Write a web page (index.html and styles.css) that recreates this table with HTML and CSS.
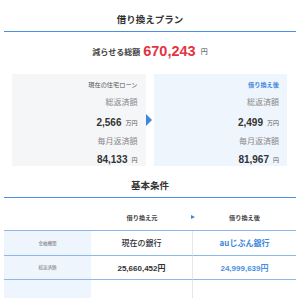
FILE: index.html
```html
<!DOCTYPE html>
<html lang="ja">
<head>
<meta charset="utf-8">
<link rel="stylesheet" href="styles.css">
</head>
<body>
<div class="page">
  <section class="plan">
    <h2 class="sec-title">借り換えプラン</h2>
    <div class="total">
      <span class="total-label">減らせる総額</span>
      <span class="total-num">670,243</span>
      <span class="total-unit">円</span>
    </div>
    <div class="compare">
      <div class="card card-now">
        <div class="card-label">現在の住宅ローン</div>
        <div class="item-label">総返済額</div>
        <div class="item-val"><span class="num">2,566</span><span class="unit">万円</span></div>
        <div class="item-label item-label2">毎月返済額</div>
        <div class="item-val item-val2"><span class="num">84,133</span><span class="unit">円</span></div>
      </div>
      <div class="arrow"></div>
      <div class="card card-after">
        <div class="card-label blue">借り換え後</div>
        <div class="item-label">総返済額</div>
        <div class="item-val"><span class="num">2,499</span><span class="unit">万円</span></div>
        <div class="item-label item-label2">毎月返済額</div>
        <div class="item-val item-val2"><span class="num">81,967</span><span class="unit">円</span></div>
      </div>
    </div>
  </section>
  <section class="basic">
    <h2 class="sec-title">基本条件</h2>
    <div class="table">
      <div class="th th-empty"></div>
      <div class="th th-from">借り換え元<span class="tri"></span></div>
      <div class="th">借り換え後</div>

      <div class="td td-key">金融機関</div>
      <div class="td td-from bank">現在の銀行</div>
      <div class="td td-to bank blue">auじぶん銀行</div>

      <div class="td td-key">総返済額</div>
      <div class="td td-from money">25,660,452円</div>
      <div class="td td-to money blue">24,999,639円</div>

      <div class="td td-key td-last"></div>
      <div class="td td-from td-last"></div>
      <div class="td td-to td-last"></div>
    </div>
  </section>
</div>
</body>
</html>
```
FILE: styles.css
```css
* { box-sizing: border-box; margin: 0; padding: 0; }
body {
  background: #fff;
  font-family: "Noto Sans CJK JP", "Liberation Sans", sans-serif;
  color: #333;
  width: 300px;
  overflow: hidden;
}
.page { padding: 0 4px; }
.sec-title {
  font-size: 9.5px;
  font-weight: 700;
  text-align: center;
  line-height: 18px;
  padding: 10px 0 3px;
  border-bottom: 1.5px solid #4a90e2;
  color: #333;
}
.total {
  margin-top: 7px;
  height: 24px;
  display: flex;
  align-items: center;
  justify-content: center;
}
.total-label { font-size: 8px; font-weight: 700; color: #444; }
.total-num {
  font-family: "Liberation Sans", Arial, sans-serif;
  font-size: 14.5px;
  font-weight: 700;
  color: #e3343f;
  margin: 0 5px 0 3px;
}
.total-unit { font-size: 7px; color: #444; }
.compare {
  margin: 11px 9px 0 8px;
  display: flex;
  align-items: center;
}
.card {
  flex: 1;
  height: 92px;
  padding: 6px 8px 0 0;
  text-align: right;
}
.card-now { background: #f5f6f8; }
.card-after { background: #eff5fc; }
.arrow {
  width: 8px;
  height: 12px;
  position: relative;
}
.arrow::before {
  content: "";
  position: absolute;
  left: 0;
  top: 0;
  border-left: 6px solid #3d88de;
  border-top: 6px solid transparent;
  border-bottom: 6px solid transparent;
}
.card-label { font-size: 6.2px; line-height: 10px; color: #555; }
.card-label.blue { color: #3d88de; font-weight: 700; }
.item-label { font-size: 8px; line-height: 12px; color: #888; margin-top: 6px; }
.item-label2 { margin-top: 5px; }
.item-val { line-height: 14px; margin-top: 4px; }
.item-val2 { margin-top: 2px; }
.num {
  font-family: "Liberation Sans", Arial, sans-serif;
  font-size: 10px;
  font-weight: 700;
  color: #333;
}
.unit { font-size: 6px; color: #555; margin-left: 4px; vertical-align: 1px; }
.table {
  display: grid;
  grid-template-columns: 87px 102px 1fr;
}
.th {
  height: 33px;
  padding-top: 14px;
  font-size: 6.2px;
  font-weight: 700;
  color: #444;
  text-align: center;
  line-height: 12px;
  border-bottom: 1.5px solid #8fb8ea;
}
.th-from { position: relative; }
.tri {
  position: absolute;
  right: -2px;
  top: 17px;
  border-left: 4px solid #3d88de;
  border-top: 2.5px solid transparent;
  border-bottom: 2.5px solid transparent;
}
.td {
  height: 24.5px;
  display: flex;
  align-items: center;
  justify-content: center;
  border-bottom: 1.5px solid #8fb8ea;
}
.td-key {
  background: #eff5fc;
  font-size: 4.5px;
  color: #777;
}
.td-from { border-right: 1px solid #e3e8ef; }
.bank { font-size: 8px; font-weight: 500; color: #333; }
.bank.blue { font-size: 8px; color: #3d88de; font-weight: 700; }
.money {
  font-family: "Liberation Sans", "Noto Sans CJK JP", sans-serif;
  font-size: 8px;
  font-weight: 700;
  color: #333;
}
.money.blue { color: #4a90e2; }
.td-last { border-bottom: none; }
.blue { color: #3d88de; }
```
